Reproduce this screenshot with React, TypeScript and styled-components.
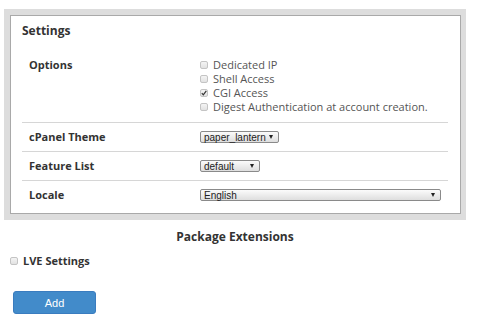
import React from 'react';
import styled, { createGlobalStyle } from 'styled-components';

const GlobalStyle = createGlobalStyle`
  html, body {
    margin: 0;
    padding: 0;
    background: #ffffff;
    font-family: "Open Sans", "Liberation Sans", sans-serif;
    color: #333;
  }
`;

// -- Styled Components --

const Page = styled.div`
  width: 462px;
  padding: 9px 0 0 4px;
`;

const Frame = styled.div`
  background-color: #dddddd;
  padding: 6px 5px 6px 6px;
`;

const Panel = styled.div`
  background: #ffffff;
  border: 1px solid #a9a9a9;
  padding: 6px 12px 4px 11px;
`;

const Title = styled.div`
  font-size: 12px;
  font-weight: 700;
  line-height: 18px;
  color: #333;
  margin-bottom: 10px;
`;

const Row = styled.div<{ $last?: boolean }>`
  display: flex;
  align-items: flex-start;
  padding: 8px 0 8px 0;
  border-bottom: ${p => (p.$last ? 'none' : '1px solid #d6d6d6')};
`;

const Label = styled.div<{ $lh: number }>`
  width: 171px;
  padding-left: 7px;
  font-size: 11px;
  font-weight: 700;
  line-height: ${p => p.$lh}px;
  color: #333;
`;

const Options = styled.div`
  display: flex;
  flex-direction: column;
`;

const OptionLine = styled.label`
  display: flex;
  align-items: center;
  gap: 5px;
  font-size: 11px;
  line-height: 14px;
  color: #555;
`;

const Box = styled.span`
  width: 8px;
  height: 8px;
  border: 1px solid #c4c4c4;
  border-radius: 2px;
  background: linear-gradient(#f4f4f4, #e2e2e2);
  box-sizing: border-box;
  display: flex;
  align-items: center;
  justify-content: center;
  flex: none;
`;

const Select = styled.div<{ $w: number }>`
  width: ${p => p.$w}px;
  height: 12px;
  box-sizing: border-box;
  border: 1px solid #8a8a8a;
  border-radius: 2px;
  background: linear-gradient(#fbfbfb, #dedede);
  display: flex;
  align-items: center;
  justify-content: space-between;
  padding: 0 5px 0 3px;
  font-family: "Liberation Sans", Arial, sans-serif;
  font-size: 10px;
  color: #222;
  white-space: nowrap;
`;

const Arrow = styled.span`
  width: 0;
  height: 0;
  margin-left: 3px;
  border-left: 2.5px solid transparent;
  border-right: 2.5px solid transparent;
  border-top: 4px solid #222;
`;

const SectionHeading = styled.div`
  text-align: center;
  font-size: 12px;
  font-weight: 700;
  line-height: 18px;
  color: #333;
  margin-top: 8px;
`;

const ExtensionLine = styled.label`
  display: flex;
  align-items: center;
  gap: 5px;
  padding-left: 6px;
  margin-top: 8px;
  font-size: 11px;
  font-weight: 700;
  line-height: 14px;
  color: #333;
`;

const AddButton = styled.button`
  margin: 23px 0 0 9px;
  width: 83px;
  height: 23px;
  border: 1px solid #3a7cbf;
  border-radius: 3px;
  background: #428bca;
  color: #ffffff;
  font-family: "Liberation Sans", Arial, sans-serif;
  font-size: 11px;
  cursor: pointer;
`;

// -- Parts --

const CheckBox: React.FC<{ checked?: boolean }> = ({ checked }) => (
  <Box>
    {checked && (
      <svg width="6" height="6" viewBox="0 0 6 6">
        <path d="M0.8 3.2 L2.3 4.8 L5.3 0.8" fill="none" stroke="#333" strokeWidth="1.2" />
      </svg>
    )}
  </Box>
);

const Dropdown: React.FC<{ value: string; width: number }> = ({ value, width }) => (
  <Select $w={width}>
    <span>{value}</span>
    <Arrow />
  </Select>
);

const options = [
  { text: 'Dedicated IP', checked: false },
  { text: 'Shell Access', checked: false },
  { text: 'CGI Access', checked: true },
  { text: 'Digest Authentication at account creation.', checked: false },
];

const App: React.FC = () => {
  return (
    <>
      <GlobalStyle />
      <Page>
        <Frame>
          <Panel>
            <Title>Settings</Title>
            <Row>
              <Label $lh={14}>Options</Label>
              <Options>
                {options.map(o => (
                  <OptionLine key={o.text}>
                    <CheckBox checked={o.checked} />
                    {o.text}
                  </OptionLine>
                ))}
              </Options>
            </Row>
            <Row>
              <Label $lh={12}>cPanel Theme</Label>
              <Dropdown value="paper_lantern" width={79} />
            </Row>
            <Row>
              <Label $lh={12}>Feature List</Label>
              <Dropdown value="default" width={60} />
            </Row>
            <Row $last>
              <Label $lh={12}>Locale</Label>
              <Dropdown value="English" width={241} />
            </Row>
          </Panel>
        </Frame>
        <SectionHeading>Package Extensions</SectionHeading>
        <ExtensionLine>
          <CheckBox />
          LVE Settings
        </ExtensionLine>
        <AddButton>Add</AddButton>
      </Page>
    </>
  );
};

export default App;
